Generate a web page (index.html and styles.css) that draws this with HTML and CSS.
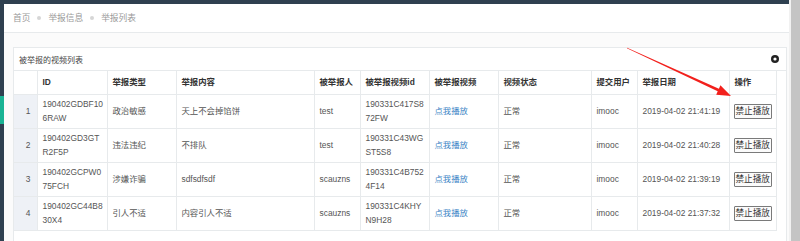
FILE: index.html
```html
<!DOCTYPE html>
<html lang="zh-CN">
<head>
    <meta charset="UTF-8">
    <title>举报列表</title>
    <link rel="stylesheet" href="styles.css">
</head>
<body>
    <div class="layout">
        <div class="sidebar">
            <div class="sidebar_active"></div>
        </div>
        <div class="page">
            <div class="topbar"></div>
            <div class="breadcrumb">
                <span>首页</span><span class="dot"></span><span>举报信息</span><span class="dot"></span><span>举报列表</span>
            </div>
            <div class="content">
                <div class="ibox">
                    <div class="ibox_title">
                        <span>被举报的视频列表</span>
                        <svg class="collapse_icon" width="8" height="8" viewBox="0 0 8 8">
                            <circle cx="4" cy="4" r="4" fill="#222"/>
                            <circle cx="4" cy="4" r="1.6" fill="#fff"/>
                        </svg>
                    </div>
                    <div class="ibox_body">
                        <table class="report_table">
                            <colgroup>
                                <col style="width:23px">
                                <col style="width:70px">
                                <col style="width:69px">
                                <col style="width:138px">
                                <col style="width:46px">
                                <col style="width:69px">
                                <col style="width:69px">
                                <col style="width:93px">
                                <col style="width:46px">
                                <col style="width:92px">
                                <col style="width:47px">
                            </colgroup>
                            <thead>
                                <tr>
                                    <th></th>
                                    <th>ID</th>
                                    <th>举报类型</th>
                                    <th>举报内容</th>
                                    <th>被举报人</th>
                                    <th>被举报视频id</th>
                                    <th>被举报视频</th>
                                    <th>视频状态</th>
                                    <th>提交用户</th>
                                    <th>举报日期</th>
                                    <th>操作</th>
                                </tr>
                            </thead>
                            <tbody>
                                <tr>
                                    <td class="num">1</td>
                                    <td>190402GDBF106RAW</td>
                                    <td>政治敏感</td>
                                    <td>天上不会掉馅饼</td>
                                    <td>test</td>
                                    <td>190331C417S872FW</td>
                                    <td><a href="#">点我播放</a></td>
                                    <td>正常</td>
                                    <td>imooc</td>
                                    <td>2019-04-02 21:41:19</td>
                                    <td class="op"><button class="ban_btn">禁止播放</button></td>
                                </tr>
                                <tr>
                                    <td class="num">2</td>
                                    <td>190402GD3GTR2F5P</td>
                                    <td>违法违纪</td>
                                    <td>不排队</td>
                                    <td>test</td>
                                    <td>190331C43WGST5S8</td>
                                    <td><a href="#">点我播放</a></td>
                                    <td>正常</td>
                                    <td>imooc</td>
                                    <td>2019-04-02 21:40:28</td>
                                    <td class="op"><button class="ban_btn">禁止播放</button></td>
                                </tr>
                                <tr>
                                    <td class="num">3</td>
                                    <td>190402GCPW075FCH</td>
                                    <td>涉嫌诈骗</td>
                                    <td>sdfsdfsdf</td>
                                    <td>scauzns</td>
                                    <td>190331C4B7524F14</td>
                                    <td><a href="#">点我播放</a></td>
                                    <td>正常</td>
                                    <td>imooc</td>
                                    <td>2019-04-02 21:39:19</td>
                                    <td class="op"><button class="ban_btn">禁止播放</button></td>
                                </tr>
                                <tr>
                                    <td class="num">4</td>
                                    <td>190402GC44B830X4</td>
                                    <td>引人不适</td>
                                    <td>内容引人不适</td>
                                    <td>scauzns</td>
                                    <td>190331C4KHYN9H28</td>
                                    <td><a href="#">点我播放</a></td>
                                    <td>正常</td>
                                    <td>imooc</td>
                                    <td>2019-04-02 21:37:32</td>
                                    <td class="op"><button class="ban_btn">禁止播放</button></td>
                                </tr>
                            </tbody>
                        </table>
                    </div>
                </div>
            </div>
        </div>
        <div class="scrollbar">
            <div class="scroll_thumb"></div>
        </div>

        <!-- 截图上的红色标注箭头 -->
        <svg class="arrow" width="800" height="241" viewBox="0 0 800 241">
            <polygon fill="#f2201c" points="627.1,47.7 718.9,88.8 720.4,85.3 731,96 716.2,94.7 717.7,91.2 626.9,48.3"/>
        </svg>
    </div>
</body>
</html>
```

FILE: styles.css
```css
/* 整体字型与重置 */
*{
    box-sizing: border-box;
    font-family: "Liberation Sans", "Noto Sans CJK SC", Arial, sans-serif;
}
body{
    margin: 0;
    overflow: hidden;
}
.layout{
    position: relative;
    display: flex;
    height: 241px;
    background-color: #fff;
}

/* 左侧深色导航条（只露出一点） */
.sidebar{
    width: 4px;
    background-color: #2f4050;
}
.sidebar_active{
    margin-top: 96px;
    height: 28px;
    background-color: #1ab394;
}

.page{
    flex: 1;
    display: flex;
    flex-direction: column;
    background-color: #fbfbfb;
}
.topbar{
    height: 4px;
    background-color: #2f4050;
}

/* 面包屑 */
.breadcrumb{
    display: flex;
    align-items: center;
    height: 29px;
    padding: 0 0 1px 9px;
    background-color: #fff;
    border-bottom: 1px solid #e7eaec;
    font-size: 8.7px;
    color: #999;
}
.dot{
    width: 4px;
    height: 4px;
    margin: 0 7px;
    border-radius: 50%;
    background-color: #d6d6d6;
}

.content{
    flex: 1;
    padding: 14px 2px 0 9px;
}

/* 表格外框 */
.ibox{
    height: 100%;
    background-color: #fff;
    border: 1px solid #e7eaec;
    border-bottom: none;
}
.ibox_title{
    display: flex;
    align-items: center;
    justify-content: space-between;
    height: 23px;
    padding: 0 7px 0 5px;
    border-bottom: 1px solid #e7eaec;
    font-size: 8px;
    color: #444;
}
.collapse_icon{
    display: block;
}

/* 表格本体 */
.report_table{
    width: 762px;
    table-layout: fixed;
    border-collapse: collapse;
    font-size: 8.4px;
    line-height: 14px;
    color: #555;
}
.report_table th,
.report_table td{
    padding: 2.5px 2px 2.5px 5px;
    border: 1px solid #e7eaec;
    text-align: left;
    vertical-align: middle;
    word-break: break-all;
}
.report_table tr > :first-child{
    border-left: none;
}
.report_table thead tr > *{
    border-top: none;
}
.report_table th{
    height: 23px;
    padding-top: 4px;
    padding-bottom: 4px;
    font-weight: bold;
    color: #333;
}
.report_table td{
    height: 34px;
}
.report_table .num{
    text-align: right;
    padding-right: 6px;
    background-color: #eef1f6;
}
.report_table .op{
    padding: 0 0 0 4px;
}
.report_table a{
    color: #3d85c6;
    text-decoration: none;
}

/* 禁止播放按钮 */
.ban_btn{
    display: block;
    padding: 0 1px;
    white-space: nowrap;
    font-size: 8.6px;
    line-height: 13px;
    color: #333;
    background-color: #fbfbfb;
    border: 1px solid #7a7a7a;
    border-radius: 1px;
}

/* 右侧滚动条 */
.scrollbar{
    width: 11px;
    padding-left: 2px;
    background-color: #f1f1f1;
}
.scroll_thumb{
    height: 100%;
    background-color: #c4c4c4;
}

/* 红色标注箭头，压在内容上面 */
.arrow{
    position: absolute;
    top: 0;
    left: 0;
    pointer-events: none;
}
```
